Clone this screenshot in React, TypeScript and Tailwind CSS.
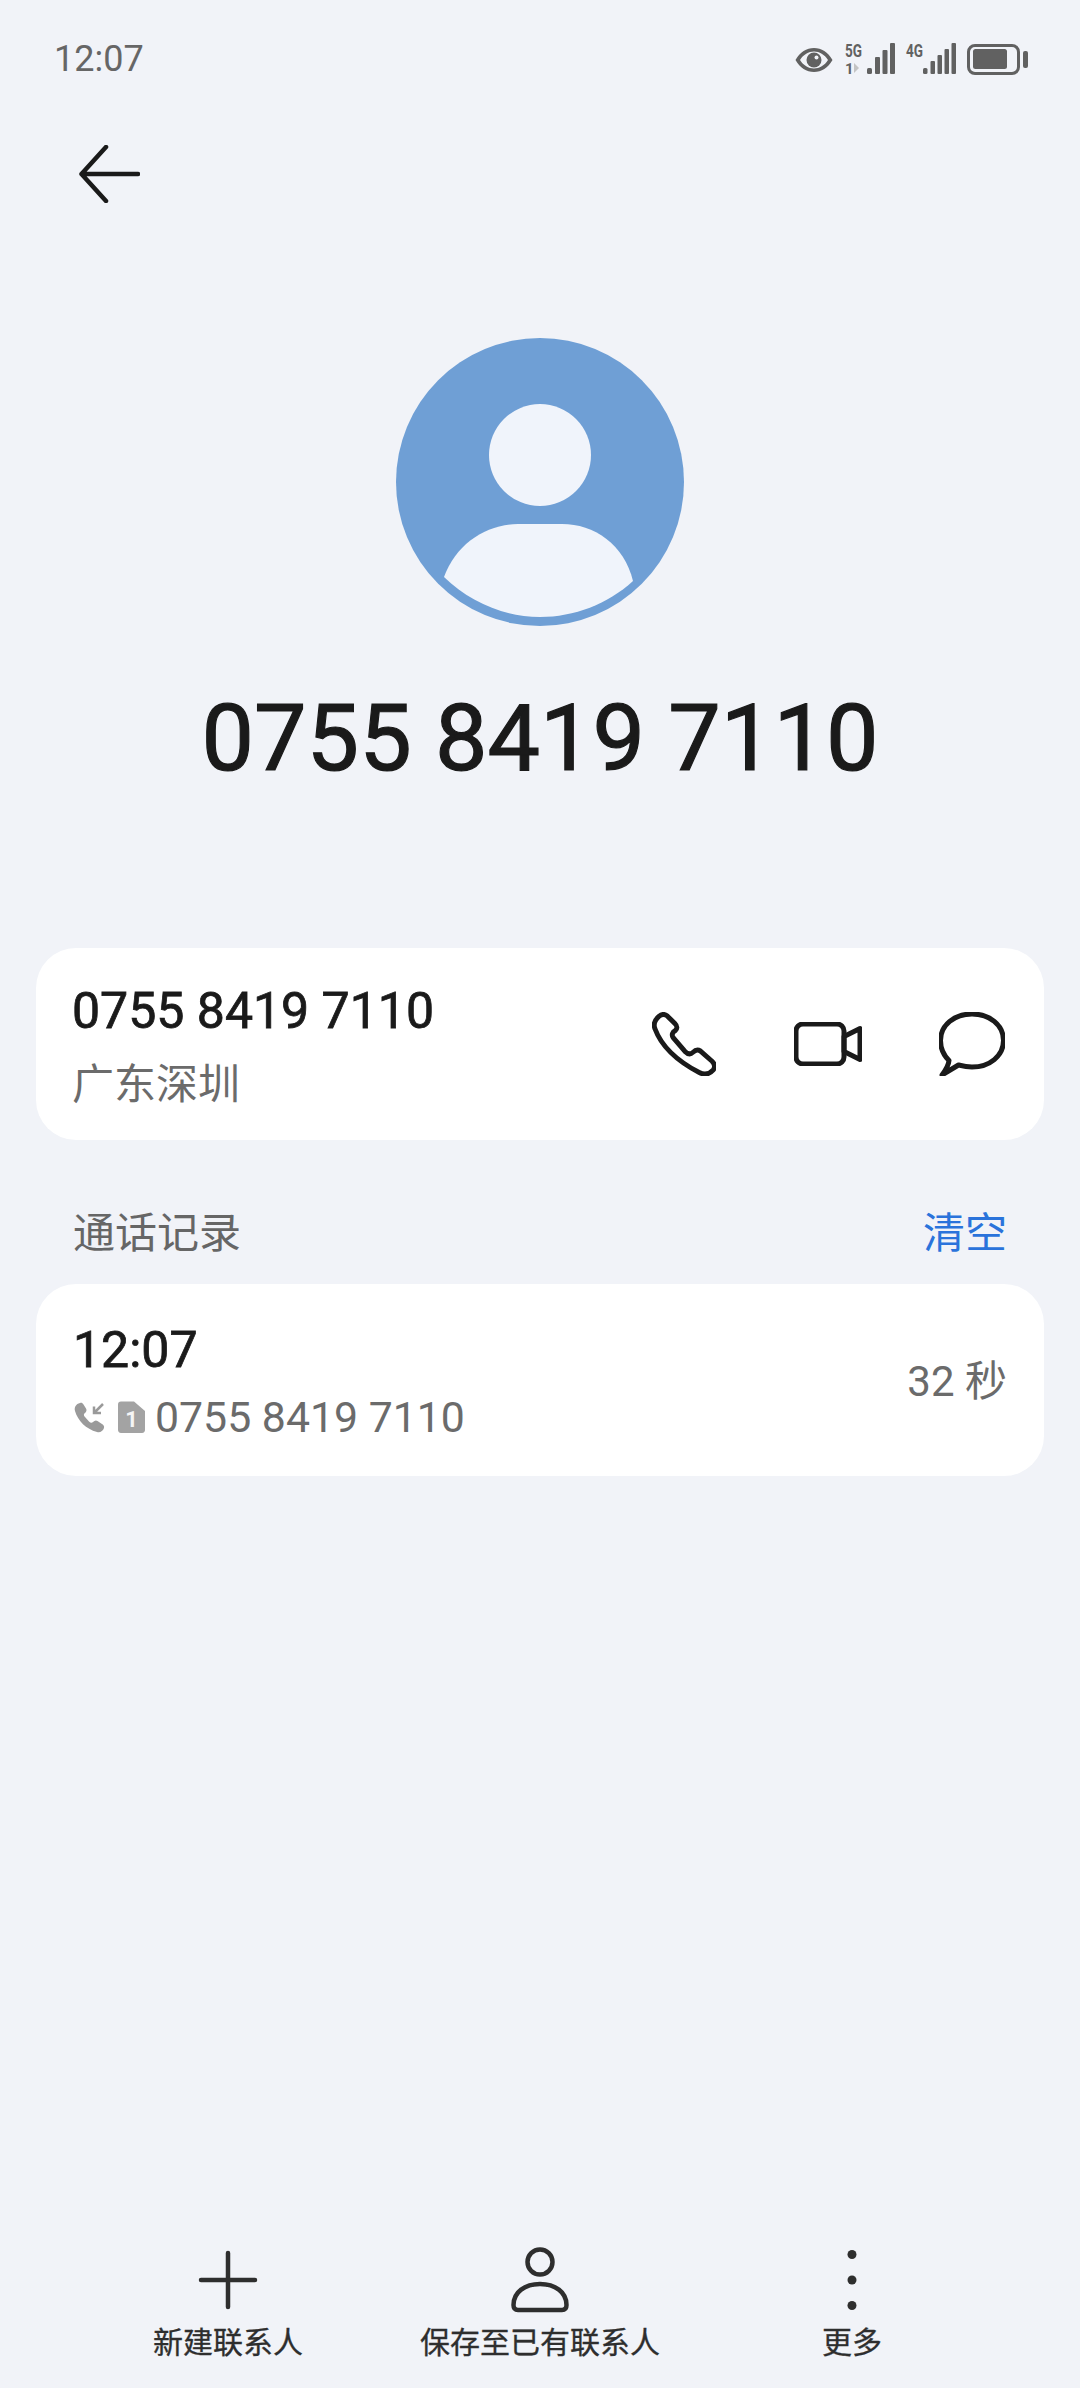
const FONT = "font-['Roboto','Noto_Sans_CJK_SC',sans-serif]";

function StatusIcons() {
  return (
    <svg width="235" height="42" viewBox="0 -4 235 42" fill="#616161" className="block">
      <path fillRule="evenodd" d="M0.500 18c4.500-8 11-12 18.500-12s14 4 18.500 12c-4.500 8-11 12-18.500 12S5 26 0.500 18zm4.500 0c3.500 5.500 8.500 8.500 14 8.500s10.500-3 14-8.500c-3.500-5.500-8.500-8.500-14-8.500S8.500 12.500 5 18z" />
      <circle cx="19" cy="18" r="7.500" />
      <circle cx="21.500" cy="15.500" r="2" fill="#f1f3f8" />
      <text x="50" y="15" fontSize="18" fontWeight="700" fontFamily="Roboto" textLength="17" lengthAdjust="spacingAndGlyphs">5G</text>
      <text x="50" y="32" fontSize="15" fontWeight="700" fontFamily="Roboto">1</text>
      <path d="M59 21l5 5-5 5z" fill="#c4c4c4" />
      <rect x="72" y="26" width="5" height="6" rx="1.500" />
      <rect x="80" y="15" width="5" height="17" rx="1" />
      <rect x="87.500" y="8" width="5" height="24" rx="1" />
      <rect x="95" y="1" width="5" height="31" rx="1" />
      <text x="111" y="15" fontSize="18" fontWeight="700" fontFamily="Roboto" textLength="17" lengthAdjust="spacingAndGlyphs">4G</text>
      <rect x="128" y="26" width="4.500" height="6" rx="1.500" />
      <rect x="135.500" y="19" width="4.500" height="13" rx="1" />
      <rect x="142.500" y="13" width="4.500" height="19" rx="1" />
      <rect x="149.500" y="7" width="4.500" height="25" rx="1" />
      <rect x="156.500" y="1" width="4.500" height="31" rx="1" />
      <rect x="173.500" y="3.500" width="50" height="28" rx="6.500" fill="none" stroke="#616161" strokeWidth="3" />
      <rect x="178" y="7" width="34" height="20" rx="2.500" />
      <rect x="228" y="9" width="5" height="17" rx="2" />
    </svg>
  );
}

function Avatar() {
  return (
    <svg width="288" height="288" viewBox="0 0 288 288" className="block">
      <circle cx="144" cy="144" r="144" fill="#6f9fd5" />
      <circle cx="144" cy="117" r="51" fill="#f0f4fb" />
      <path d="M48 239C60 206 90 186 122 186H166C198 186 228 206 237 243C212 266 178 279 144 279C108 279 74 264 48 239Z" fill="#f0f4fb" />
    </svg>
  );
}

function PhoneIcon() {
  return (
    <svg width="64" height="64" viewBox="1 1 65 65" fill="none" stroke="#1a1a1a" strokeWidth="5" strokeLinejoin="round" className="block">
      <path d="M4 18C2 13 4 9 8 5.500C11 3 14 3 16.500 5L24 12.500C27 15.500 27 17.500 24.500 20C22 21.500 20.500 24 22.500 27L34.500 41C37.500 44 40 44.500 42.500 42C45 39.500 47 38.500 50 40.500L62 51C65 54 65.500 57 63 60C59 64.500 54 65 49 62.500C27 51 11 37 4 18Z" />
    </svg>
  );
}

function VideoIcon() {
  return (
    <svg width="68" height="44" viewBox="1 1 68 44" fill="none" stroke="#1a1a1a" strokeWidth="5" strokeLinejoin="round" className="block">
      <rect x="3" y="3" width="48" height="40" rx="7" />
      <path d="M51 15.500L67 7.500V38.500L51 30.500Z" />
    </svg>
  );
}

function BubbleIcon() {
  return (
    <svg width="66" height="64" viewBox="1 0.500 66 64" fill="none" stroke="#1a1a1a" strokeWidth="5" strokeLinejoin="round" className="block">
      <path d="M11 49C5.500 43.500 2.500 36.500 2.500 29C2.500 13.500 16.500 2.500 34 2.500C51.500 2.500 65.500 13.500 65.500 29C65.500 44.500 51.500 55.500 34 55.500C29 55.500 24.500 54.500 20.500 53.500L4 63.500C7 59.500 10.500 54 11 49Z" />
    </svg>
  );
}

function CallIcons() {
  return (
    <svg width="72" height="32" viewBox="0 0 72 32" className="block">
      <path d="M7 2C3 3 1 6 2 10C5 20 13 28 24 31C27 32 30 30 31 27C31.500 25 30.500 24 29 23L24.500 20C23 19 21.500 19.500 20 21C19 22 17.500 22 16 20.500L12 16C10.500 14.500 10.500 13 12 12C13.500 10.500 14 9 13 7.500L10.500 3.500C9.500 2 8.500 1.500 7 2Z" fill="#9a9a9a" />
      <path d="M30 3L21 12M21 5.500V12H28" fill="none" stroke="#9a9a9a" strokeWidth="2.500" />
      <path d="M48 0.500H61L72 10V29C72 30.500 71 32 69 32H48C46 32 45 30.500 45 29V3.500C45 1.500 46 0.500 48 0.500Z" fill="#a3a3a3" />
      <text x="58.500" y="26" textAnchor="middle" fontSize="22" fontWeight="700" fontFamily="Roboto" fill="#f5f5f5">1</text>
    </svg>
  );
}

function ActionIcon({ label, children }: { label: string; children: React.ReactNode }) {
  return (
    <div className="flex flex-col items-center">
      <div className="h-[66px] flex items-center justify-center">{children}</div>
      <span className="mt-[10px] text-[30px] leading-[40px] [-webkit-text-stroke:0.3px_#2e2e2e] text-[#2e2e2e]">{label}</span>
    </div>
  );
}

export default function App() {
  return (
    <div className={`${FONT} w-[1080px] h-[2388px] bg-[#f1f3f8] flex flex-col overflow-hidden`}>
      <div className="h-[60px] mt-[29px] pl-[54px] pr-[50px] flex items-center justify-between">
        <span className="text-[36px] leading-none text-[#666666]">12:07</span>
        <StatusIcons />
      </div>

      <div className="mt-[56px] pl-[78px]">
        <svg width="62" height="58" viewBox="0 0 62 58" fill="none" stroke="#1a1a1a" strokeWidth="4.500" strokeLinecap="round" strokeLinejoin="round" className="block">
          <path d="M60 29H3.500M28 2L3.500 29L28 56" />
        </svg>
      </div>

      <div className="mt-[135px] flex justify-center">
        <Avatar />
      </div>

      <div className="mt-[58px] text-center text-[93.500px] leading-[108px] [-webkit-text-stroke:1.2px_#1a1a1a] text-[#1a1a1a]">0755 8419 7110</div>

      <div className="mt-[156px] mx-[36px] h-[192px] rounded-[40px] bg-white pl-[36px] pr-[39px] flex items-center justify-between">
        <div className="pt-[4px]">
          <div className="text-[50px] leading-[60px] [-webkit-text-stroke:0.8px_#1a1a1a] text-[#1a1a1a]">0755 8419 7110</div>
          <div className="mt-[18px] text-[42px] leading-[52px] text-[#6b6b6b]">广东深圳</div>
        </div>
        <div className="flex items-center">
          <PhoneIcon />
          <div className="ml-[78px]"><VideoIcon /></div>
          <div className="ml-[77px]"><BubbleIcon /></div>
        </div>
      </div>

      <div className="mt-[66px] mx-[73px] flex items-center justify-between text-[42px] leading-[56px]">
        <span className="text-[#666666]">通话记录</span>
        <span className="text-[#2a73db]">清空</span>
      </div>

      <div className="mt-[22px] mx-[36px] h-[192px] rounded-[40px] bg-white px-[37px] flex items-center justify-between">
        <div className="pt-[3px]">
          <div className="text-[50px] leading-[58px] [-webkit-text-stroke:0.8px_#1a1a1a] text-[#1a1a1a]">12:07</div>
          <div className="mt-[12px] flex items-center gap-[10px]">
            <CallIcons />
            <span className="text-[42.800px] leading-[52px] text-[#6b6b6b]">0755 8419 7110</span>
          </div>
        </div>
        <span className="pt-[4px] text-[42px] leading-[52px] text-[#6b6b6b]">32 秒</span>
      </div>

      <div className="mt-auto mb-[25px] mx-[72px] grid grid-cols-3">
        <ActionIcon label="新建联系人">
          <svg width="60" height="60" viewBox="0 0 60 60" stroke="#2e2e2e" strokeWidth="4.500" strokeLinecap="round" className="block">
            <path d="M30 3V57M3 30H57" />
          </svg>
        </ActionIcon>
        <ActionIcon label="保存至已有联系人">
          <svg width="60" height="66" viewBox="0 0 60 66" fill="none" stroke="#2e2e2e" strokeWidth="4.500" strokeLinejoin="round" className="block">
            <circle cx="30" cy="15" r="12.500" />
            <path d="M3.500 58C3.500 45 15 37 30 37C45 37 56.500 45 56.500 58C56.500 61 55 63 52 63H8C5 63 3.500 61 3.500 58Z" />
          </svg>
        </ActionIcon>
        <ActionIcon label="更多">
          <svg width="12" height="66" viewBox="0 0 12 66" fill="#2e2e2e" className="block">
            <circle cx="6" cy="7.500" r="4.500" />
            <circle cx="6" cy="33" r="4.500" />
            <circle cx="6" cy="58.500" r="4.500" />
          </svg>
        </ActionIcon>
      </div>
    </div>
  );
}
